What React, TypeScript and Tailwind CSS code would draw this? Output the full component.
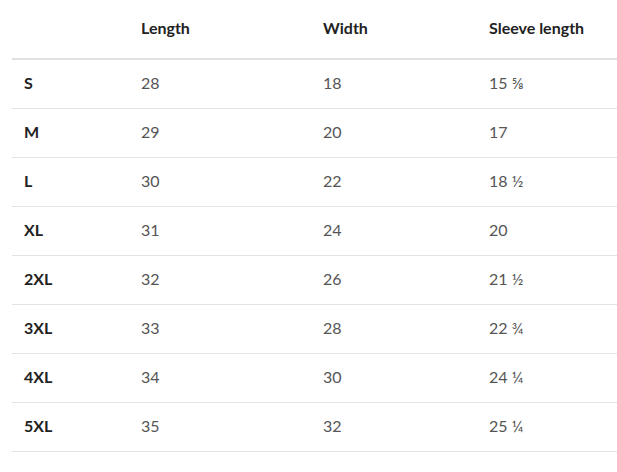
import React from 'react';

const rows: [string, string, string, string][] = [
    ['S', '28', '18', '15 ⅝'],
    ['M', '29', '20', '17'],
    ['L', '30', '22', '18 ½'],
    ['XL', '31', '24', '20'],
    ['2XL', '32', '26', '21 ½'],
    ['3XL', '33', '28', '22 ¾'],
    ['4XL', '34', '30', '24 ¼'],
    ['5XL', '35', '32', '25 ¼'],
];

export default function App() {
    return (
        <div className="w-[617px] h-[472px] bg-white pl-3 font-['Lato',sans-serif]">
            <table className="w-[605px] border-collapse text-[16px]">
                <thead>
                    <tr className="h-[59px] border-b-2 border-[#e1e1e1]">
                        <th className="w-[117px]"></th>
                        <th className="w-[182px] pl-3 pb-[2px] text-left font-bold text-[#222]">Length</th>
                        <th className="w-[166px] pl-3 pb-[2px] text-left font-bold text-[#222]">Width</th>
                        <th className="pl-3 pb-[2px] text-left font-bold text-[#222]">Sleeve length</th>
                    </tr>
                </thead>
                <tbody>
                    {rows.map((r) => (
                        <tr key={r[0]} className="h-[49px] border-b border-[#e4e4e4]">
                            <td className="pl-3 pb-[2px] font-bold text-[#222]">{r[0]}</td>
                            <td className="pl-3 pb-[2px] text-[#555]">{r[1]}</td>
                            <td className="pl-3 pb-[2px] text-[#555]">{r[2]}</td>
                            <td className="pl-3 pb-[2px] text-[#555]">{r[3]}</td>
                        </tr>
                    ))}
                </tbody>
            </table>
        </div>
    );
}
